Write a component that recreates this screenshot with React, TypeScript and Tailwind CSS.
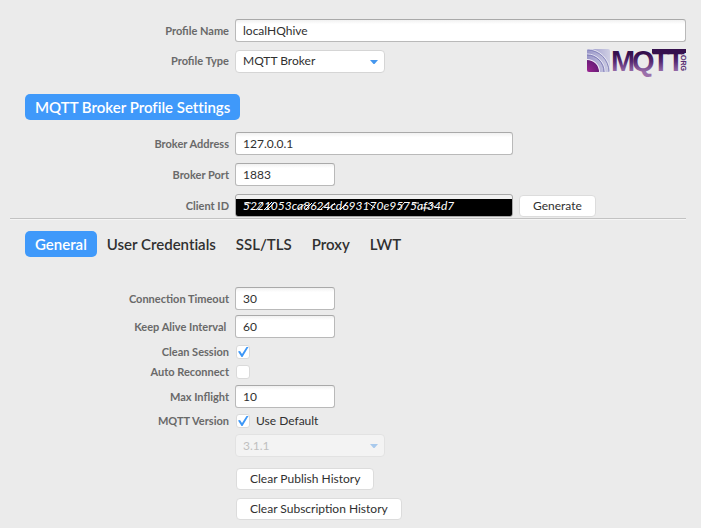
import { useState } from "react";
import type { ReactNode } from "react";

const fieldClass =
  "h-[23px] rounded-[3px] border border-[#b9b9b9] border-t-[#a9a9a9] bg-linear-to-b from-[#f1f1f1] to-white to-20% px-[7px] text-[12px] text-[#303030] outline-none";
const buttonClass =
  "h-[22px] rounded-[4px] border border-[#dcdcdc] bg-white px-[13px] text-[12px] leading-[20px] text-[#303030]";

function Row({ label, id, children }: { label?: string; id?: string; children: ReactNode }) {
  return (
    <div className="flex items-center gap-[6px]">
      <label htmlFor={id} className="w-[229px] shrink-0 text-right text-[11px] leading-[14px] font-bold text-[#696969]">
        {label}
      </label>
      {children}
    </div>
  );
}

function Field({ id, value, width }: { id: string; value: string; width: string }) {
  return <input id={id} type="text" defaultValue={value} className={`${fieldClass} ${width}`} />;
}

function Check({ id, on = false }: { id: string; on?: boolean }) {
  const [checked, setChecked] = useState(on);
  return (
    <span className="relative ml-px block size-[14px] shrink-0">
      <input
        id={id}
        type="checkbox"
        checked={checked}
        onChange={(e) => setChecked(e.target.checked)}
        className="block size-[14px] appearance-none rounded-[3px] border border-[#dadada] bg-white"
      />
      {checked && (
        <svg viewBox="0 0 14 14" className="pointer-events-none absolute inset-0 size-[14px]">
          <path d="M2 6.5 L4 6 L6 9 L10.5 2 L12.5 2 L6.5 12 L5.5 12 Z" fill="#3d97f7" />
        </svg>
      )}
    </span>
  );
}

function Dropdown({ id, value, label, disabled = false }: { id: string; value: string; label?: string; disabled?: boolean }) {
  return (
    <span className={`relative block w-[150px] ${disabled ? "opacity-40" : ""}`}>
      <select
        id={id}
        aria-label={label}
        disabled={disabled}
        className={`block h-[23px] w-full appearance-none rounded-[4px] border border-[#d5d5d5] bg-white px-[7px] text-[12px] ${disabled ? "text-[#808080]" : "text-[#303030]"}`}
      >
        <option>{value}</option>
      </select>
      <svg viewBox="0 0 8 5" className="pointer-events-none absolute top-[10px] right-[7px] h-[5px] w-[8px]">
        <path d="M0 0 H8 L4.5 4 H3.5 Z" fill="#4597ee" />
      </svg>
    </span>
  );
}

function Logo() {
  return (
    <svg viewBox="0 0 100 26" role="img" aria-label="MQTT.org" className="h-[26px] w-[100px] overflow-visible" fontFamily="Liberation Sans, sans-serif">
      <defs>
        <linearGradient id="letters" gradientUnits="userSpaceOnUse" x1="0" y1="1" x2="0" y2="24">
          <stop offset="0.2" stopColor="#35104d" />
          <stop offset="0.55" stopColor="#562a73" />
          <stop offset="1" stopColor="#9b70ab" />
        </linearGradient>
        <linearGradient id="tile" x1="0" y1="0" x2="1" y2="0">
          <stop offset="0" stopColor="#9996c8" />
          <stop offset="1" stopColor="#cfcfe4" />
        </linearGradient>
        <radialGradient id="core" gradientUnits="userSpaceOnUse" cx="1" cy="24" r="13">
          <stop offset="0" stopColor="#9d2590" />
          <stop offset="1" stopColor="#651b77" />
        </radialGradient>
        <clipPath id="tileClip">
          <rect x="1" y="1" width="23" height="23" rx="2" />
        </clipPath>
      </defs>
      <g clipPath="url(#tileClip)">
        <rect x="1" y="1" width="23" height="23" fill="url(#tile)" />
        <circle cx="1" cy="24" r="23" fill="none" stroke="#e6e6f2" strokeWidth="1" />
        <circle cx="1" cy="24" r="22" fill="none" stroke="#8584bb" strokeWidth="1" />
        <circle cx="1" cy="24" r="18" fill="none" stroke="#e6e6f4" strokeWidth="1" />
        <circle cx="1" cy="24" r="17" fill="none" stroke="#7c79b6" strokeWidth="1" />
        <circle cx="1" cy="24" r="13" fill="#f4eef8" />
        <circle cx="1" cy="24" r="12" fill="url(#core)" />
      </g>
      <text x="25 46 66 81" y="23" fontSize="29" fontWeight="bold" fill="url(#letters)">
        MQTT
      </text>
      <rect x="66" y="1" width="34" height="4" fill="#35104d" />
      <text transform="translate(95 5) rotate(90)" fontSize="7" fill="#54266f" stroke="#54266f" strokeWidth="0.3">
        .ORG
      </text>
    </svg>
  );
}

const tabs = ["General", "User Credentials", "SSL/TLS", "Proxy", "LWT"];

export default function App() {
  const [tab, setTab] = useState("General");
  return (
    <main className="min-h-screen bg-[#ebebeb] pt-[19px] pr-[15px] font-['Lato',sans-serif] text-[#303030]">
      <Row label="Profile Name" id="name">
        <Field id="name" value="localHQhive" width="min-w-0 flex-1" />
      </Row>
      <div className="mt-[6px] flex h-[26px] items-center justify-between">
        <Row label="Profile Type" id="type">
          <Dropdown id="type" value="MQTT Broker" />
        </Row>
        <Logo />
      </div>
      <h1 className="mt-5 ml-[25px] w-fit rounded-[5px] bg-[#3f99fa] px-[10px] text-[15px] leading-[26px] font-semibold text-white [font-variant-ligatures:none]">
        MQTT Broker Profile Settings
      </h1>
      <div className="mt-3 flex flex-col gap-2">
        <Row label="Broker Address" id="address">
          <Field id="address" value="127.0.0.1" width="w-[278px]" />
        </Row>
        <Row label="Broker Port" id="port">
          <Field id="port" value="1883" width="w-[100px]" />
        </Row>
        <Row label="Client ID" id="client">
          <span className="relative block">
            <input
              id="client"
              type="text"
              defaultValue="5221053ca8624cd693170e9575af34d7"
              className="block h-[23px] w-[278px] rounded-[3px] border border-[#a9a9a9] bg-linear-to-b from-[#f1f1f1] from-[4px] to-black to-[4px] px-[7px] text-[12px] text-white italic outline-none"
            />
            <svg viewBox="0 0 216 10" className="pointer-events-none absolute top-[7px] left-[8px] h-[10px] w-[216px]" stroke="#fff" fill="none">
              <path d="M1 2H8M13 9L20 1M21 9L29 1M24 9L31 2M55 8L62 3M62 9L69 2M78 8L85 2M92 2L84 9M97 9L103 3M125 2L132 7M162 1L156 8M169 2H176M178 7H187M187 2L193 7" />
            </svg>
          </span>
          <button type="button" className={buttonClass}>Generate</button>
        </Row>
      </div>
      <hr className="mt-px ml-[10px] border-t border-b border-t-[#c2c2c2] border-b-[#f5f5f5]" />
      <div role="tablist" className="mt-[11px] ml-[25px] flex">
        {tabs.map((name) => (
          <button
            key={name}
            type="button"
            role="tab"
            aria-selected={tab === name}
            onClick={() => setTab(name)}
            className={`rounded-[5px] px-[10px] text-[15px] leading-[26px] font-semibold [font-variant-ligatures:none] ${tab === name ? "bg-[#3f99fa] text-white" : "text-[#303030]"}`}
          >
            {name}
          </button>
        ))}
      </div>
      <div className="mt-[30px] flex flex-col gap-[5px]">
        <Row label="Connection Timeout" id="timeout">
          <Field id="timeout" value="30" width="w-[100px]" />
        </Row>
        <Row label={"Keep Alive Interval\u00a0"} id="keepalive">
          <Field id="keepalive" value="60" width="w-[100px]" />
        </Row>
      </div>
      <div className="mt-[7px] flex flex-col gap-[6px]">
        <Row label="Clean Session" id="clean">
          <Check id="clean" on />
        </Row>
        <Row label="Auto Reconnect" id="reconnect">
          <Check id="reconnect" />
        </Row>
        <Row label="Max Inflight" id="inflight">
          <Field id="inflight" value="10" width="w-[100px]" />
        </Row>
        <Row label="MQTT Version" id="default">
          <Check id="default" on />
          <label htmlFor="default" className="text-[12px] leading-[14px]">Use Default</label>
        </Row>
        <Row>
          <Dropdown id="version" label="MQTT version number" value="3.1.1" disabled />
        </Row>
      </div>
      <div className="mt-[11px] ml-[236px] flex flex-col items-start gap-2">
        <button type="button" className={buttonClass}>Clear Publish History</button>
        <button type="button" className={buttonClass}>Clear Subscription History</button>
      </div>
    </main>
  );
}
